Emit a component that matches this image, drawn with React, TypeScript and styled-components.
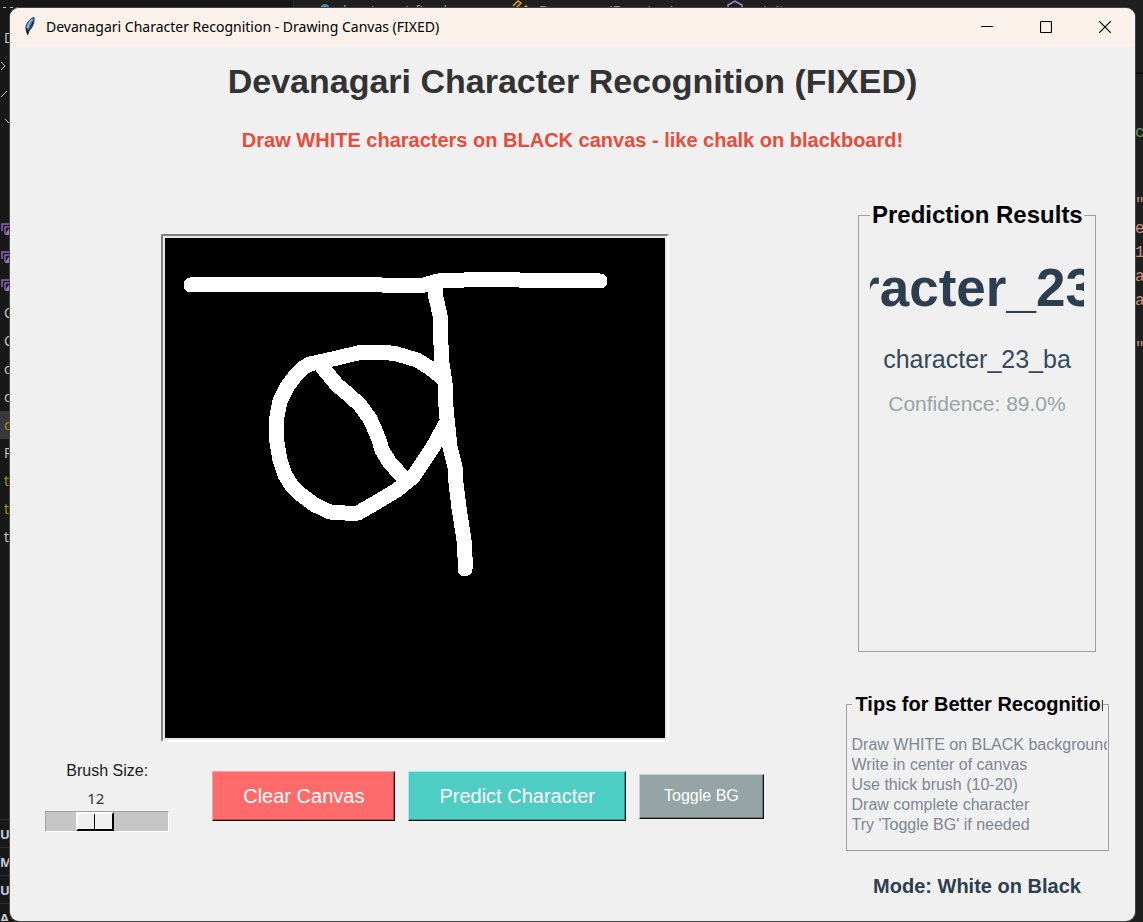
import React, { useState } from "react";
import styled, { createGlobalStyle } from "styled-components";

const GlobalStyle = createGlobalStyle`
  * { box-sizing: border-box; }
  body { margin: 0; background: #181818; font-family: "Liberation Sans", Arial, sans-serif; }
`;

const Desktop = styled.div`
  display: grid;
  grid-template-columns: 10px 1fr 8px;
  grid-template-rows: 8px 1fr;
  min-height: 100vh;
  padding-bottom: 1px;
  background: linear-gradient(90deg, #181818 50%, #1f1f1f 50%);
`;

const EditorTop = styled.div`
  grid-column: 1 / -1;
  display: grid;
  grid-template-columns: 294px 1fr;
  height: 8px;
  overflow: hidden;
  background: #1f1f1f;
  color: #a0a0a0;
  font: 14px/22px "Open Sans", sans-serif;
`;

const ExplorerTitle = styled.span`
  background: #181818;
  border-right: 1px solid #2b2b2b;
  color: #cccccc;
  font-size: 13px;
  font-weight: 700;
`;

const Breadcrumbs = styled.div`
  display: flex;
  align-items: flex-start;
  gap: 8px;
  padding-left: 26px;
  white-space: nowrap;

  svg { flex: none; }
`;

const Crumb = styled.span<{ $width: number }>`
  width: ${(p) => p.$width}px;
`;

const Explorer = styled.div`
  height: 0;
  min-height: 100%;
  overflow: hidden;
  background: #181818;
  font: 14px/28px "Open Sans", sans-serif;
`;

const ExplorerRow = styled.div<{ $color?: string; $active?: boolean; $icon?: boolean }>`
  display: flex;
  align-items: center;
  height: 28px;
  padding-left: ${(p) => (p.$icon ? 1 : 4)}px;
  color: ${(p) => p.$color ?? "#cccccc"};
  background: ${(p) => (p.$active ? "#37373d" : "transparent")};

  svg { flex: none; }
`;

const ExplorerGap = styled.div<{ $height: number }>`
  height: ${(p) => p.$height}px;
`;

const ExplorerSection = styled.div`
  height: 28px;
  border-top: 1px solid #2b2b2b;
  color: #cccccc;
  font-size: 13px;
  font-weight: 700;
`;

const CodeEdge = styled.div`
  height: 0;
  min-height: 100%;
  overflow: hidden;
  background: #1f1f1f;
  font: 16px/24px "Liberation Mono", monospace;
  white-space: pre;
`;

const CodeHeader = styled.div`
  height: 66px;
  margin-bottom: 47px;
  border-bottom: 2px solid #101010;
`;

const CodeLine = styled.div<{ $color: string }>`
  height: 24px;
  color: ${(p) => p.$color};
`;

const Window = styled.div`
  display: flex;
  flex-direction: column;
  min-width: 0;
  overflow: hidden;
  border-radius: 9px;
  box-shadow: 0 0 0 1px #444444;
  background: #f0f0f0;
  z-index: 1;
`;

const TitleBar = styled.header`
  display: flex;
  align-items: center;
  height: 38px;
  padding: 0 1px 0 12px;
  background: #faf1eb;
  color: #000;
  font: 14px/20px "Noto Sans", sans-serif;
`;

const TitleText = styled.span`
  flex: 1;
  padding-left: 8px;
  white-space: nowrap;
`;

const CaptionButton = styled.button`
  display: grid;
  place-items: center;
  width: 59px;
  height: 38px;
  padding: 0;
  border: 0;
  background: transparent;
`;

const Heading = styled.h1`
  margin: 15px 0 0;
  color: #333333;
  font-size: 34px;
  line-height: 40px;
  text-align: center;
`;

const Subtitle = styled.p`
  margin: 27px 0 0;
  color: #e74c3c;
  font-size: 20px;
  font-weight: 700;
  line-height: 24px;
  text-align: center;
`;

const Main = styled.main`
  display: grid;
  grid-template-columns: 1fr 316px;
  padding-top: 49px;
`;

const DrawColumn = styled.section`
  display: flex;
  flex-direction: column;
  align-items: center;
  padding-top: 33px;
`;

const CanvasFrame = styled.div`
  display: flex;
  padding: 2px;
  border: 2px solid;
  border-color: #808080 #ffffff #ffffff #808080;
  background: #e8e8e8;
`;

const Controls = styled.div`
  display: flex;
  align-items: center;
  gap: 13px;
  padding: 18px 20px 0 0;
`;

const BrushControl = styled.div`
  display: flex;
  flex-direction: column;
  width: 124px;
  margin-right: 30px;
`;

const BrushLabel = styled.label`
  color: #1a1a1a;
  font-size: 16px;
  line-height: 22px;
  text-align: center;
`;

const BrushValue = styled.output`
  padding: 5px 0 2px 42px;
  color: #333;
  font: 15px/22px "Noto Sans", sans-serif;
`;

const BrushSlider = styled.input`
  appearance: none;
  width: 124px;
  height: 21px;
  margin: 0;
  border: 1px solid;
  border-color: #a0a0a0 #ffffff #ffffff #a0a0a0;
  background: #c6c6c6;

  &::-webkit-slider-thumb {
    appearance: none;
    box-sizing: border-box;
    width: 38px;
    height: 19px;
    border: 2px solid;
    border-color: #ffffff #000000 #000000 #ffffff;
    background: linear-gradient(90deg, #efefef 16px, #000 16px, #000 17px, #fff 17px, #efefef 18px);
  }
`;

const ActionButton = styled.button<{ $bg: string; $light: string; $dark: string; $small?: boolean }>`
  height: ${(p) => (p.$small ? 45 : 50)}px;
  padding: 0 ${(p) => (p.$small ? 24 : 30)}px;
  border: 1px solid;
  border-color: ${(p) => p.$light} #111 #111 ${(p) => p.$light};
  box-shadow: inset -1px -1px ${(p) => p.$dark};
  background: ${(p) => p.$bg};
  color: #fff;
  font-family: inherit;
  font-size: ${(p) => (p.$small ? 16 : 20)}px;
  white-space: nowrap;
`;

const SideColumn = styled.aside`
  display: flex;
  flex-direction: column;
  align-items: center;
`;

const Group = styled.fieldset<{ $width: number; $height: number; $padding: string }>`
  width: ${(p) => p.$width}px;
  height: ${(p) => p.$height}px;
  min-width: 0;
  margin: 0;
  padding: ${(p) => p.$padding};
  border: 1px solid #a0a0a0;
  overflow: hidden;
`;

const GroupTitle = styled.legend<{ $size: number; $width: number; $indent: number }>`
  width: ${(p) => p.$width}px;
  padding: 0 0 0 ${(p) => p.$indent}px;
  overflow: hidden;
  color: #000;
  font-size: ${(p) => p.$size}px;
  font-weight: 700;
  line-height: 28px;
  white-space: nowrap;
`;

const BigResult = styled.div`
  display: flex;
  justify-content: center;
  margin-top: 27px;
  overflow: hidden;
  color: #2c3e50;
  font-size: 53px;
  font-weight: 700;
  line-height: 64px;
`;

const ResultName = styled.div`
  margin-top: 25px;
  color: #34495e;
  font-size: 25px;
  line-height: 28px;
  text-align: center;
`;

const Confidence = styled.div`
  margin-top: 19px;
  color: #95a5a6;
  font-size: 21px;
  line-height: 24px;
  text-align: center;
`;

const TipList = styled.ul`
  margin: 17px 0 0;
  padding: 0;
  overflow: hidden;
  list-style: none;
  color: #7b8794;
  font-size: 16px;
  line-height: 20px;
  white-space: nowrap;
`;

const TipsBlock = styled.div`
  padding-top: 38px;
`;

const Mode = styled.p`
  margin: 23px 0 0;
  color: #2c3e50;
  font-size: 20px;
  font-weight: 700;
  line-height: 24px;
`;

const strokes = [
  "26,47 37,46 120,46 124,47 158,46 193,46 217,47 255,48 273,43 299,42 315,41 350,41 359,43 390,42 418,42 435,43",
  "270,48 271,60 275,77 276,107 277,125 280,145 281,169 282,180 285,209 290,229 291,245 294,270 299,302 300,319 300,331",
  "275,138 265,130 252,122 232,116 218,114 197,114 172,120 145,126 138,130 130,138 122,149 115,163 112,178 111,192 112,205 115,222 120,237 127,248 135,256 150,267 165,274 180,275 193,275 212,264 232,252 248,239 268,209 280,187",
  "158,130 172,147 184,157 195,167 205,181 210,192 214,202 217,212 225,225 237,238",
];

const tips = [
  "Draw WHITE on BLACK background",
  "Write in center of canvas",
  "Use thick brush (10-20)",
  "Draw complete character",
  "Try 'Toggle BG' if needed",
];

function Feather() {
  return (
    <svg width="16" height="20" viewBox="0 0 16 20" aria-hidden="true">
      <path d="M12 .5C8 1.500 4.500 6 3.800 10.500L5 15C9 12.500 12.500 8 12 .5Z" fill="#3d73b5" stroke="#2a3542" strokeWidth="1" />
      <path d="M10.500 2.500C8 4 6.200 7 5.500 11" fill="none" stroke="#8fc0ee" strokeWidth="1.600" />
      <path d="M11.500 4C10 8 7.500 12 5.500 18" fill="none" stroke="#1c1c1c" strokeWidth="1" />
      <path d="M3.800 11L4 14.500L5.500 18L7 13.500" fill="#1c1c1c" />
    </svg>
  );
}

function PictureIcon() {
  return (
    <svg width="14" height="12" viewBox="0 0 14 12" aria-hidden="true">
      <path d="M1 8V1H13M4 11V4H14" fill="none" stroke="#8f63b8" strokeWidth="1.500" />
      <path d="M4 12L7.500 6L11 12Z" fill="#a074c4" />
    </svg>
  );
}

function Chevron({ variant }: { variant: "closed" | "open" | "nested" }) {
  const paths = {
    closed: "M-1 0L4 5L-1 10",
    open: "M-4 3L0 8L6 2",
    nested: "M4 2L10 8",
  };
  return (
    <svg width="10" height="10" viewBox="0 0 10 10" fill="none" stroke="#cccccc" aria-hidden="true">
      <path d={paths[variant]} />
    </svg>
  );
}

export default function App() {
  const [brush, setBrush] = useState(12);
  return (
    <>
      <GlobalStyle />
      <Desktop>
        <EditorTop>
          <ExplorerTitle>ANDWRITTEN</ExplorerTitle>
          <Breadcrumbs>
            <svg width="10" height="8" viewBox="0 0 10 8" aria-hidden="true">
              <path d="M1 8V6Q5 2 9 6V8Z" fill="#4b8baf" />
            </svg>
            <Crumb $width={149}>drawing_ui_fixed.py</Crumb>
            <Crumb $width={8}>›</Crumb>
            <svg width="20" height="8" viewBox="0 0 20 8" fill="none" stroke="#ee9d28" strokeWidth="1.500" aria-hidden="true">
              <path d="M2 6L7 1L10 3L5 8M13 8L15 6L17 8" />
            </svg>
            <Crumb $width={164}>DevanagariDrawingApp</Crumb>
            <Crumb $width={8}>›</Crumb>
            <svg width="16" height="8" viewBox="0 0 16 8" fill="none" stroke="#b180d7" strokeWidth="1.500" aria-hidden="true">
              <path d="M1 8V5L8 1L15 5V8" />
            </svg>
            <Crumb $width={60}>__init__</Crumb>
          </Breadcrumbs>
        </EditorTop>

        <Explorer>
          <ExplorerGap $height={16} />
          <ExplorerRow>D</ExplorerRow>
          <ExplorerRow $icon><Chevron variant="closed" /></ExplorerRow>
          <ExplorerRow $icon><Chevron variant="open" /></ExplorerRow>
          <ExplorerRow $icon><Chevron variant="nested" /></ExplorerRow>
          <ExplorerGap $height={79} />
          <ExplorerRow $icon><PictureIcon /></ExplorerRow>
          <ExplorerRow $icon><PictureIcon /></ExplorerRow>
          <ExplorerRow $icon><PictureIcon /></ExplorerRow>
          <ExplorerRow>C</ExplorerRow>
          <ExplorerRow>C</ExplorerRow>
          <ExplorerRow>c</ExplorerRow>
          <ExplorerRow>c</ExplorerRow>
          <ExplorerRow $color="#b89500" $active>c</ExplorerRow>
          <ExplorerRow>R</ExplorerRow>
          <ExplorerRow $color="#b89500">t</ExplorerRow>
          <ExplorerRow $color="#b89500">t</ExplorerRow>
          <ExplorerRow>t</ExplorerRow>
          <ExplorerGap $height={268} />
          <ExplorerSection>UT</ExplorerSection>
          <ExplorerSection>M</ExplorerSection>
          <ExplorerSection>UN</ExplorerSection>
          <ExplorerSection>A</ExplorerSection>
        </Explorer>

        <Window>
          <TitleBar>
            <Feather />
            <TitleText>Devanagari Character Recognition - Drawing Canvas (FIXED)</TitleText>
            <CaptionButton aria-label="Minimize">
              <svg width="12" height="12" viewBox="0 0 12 12"><path d="M0 5.500H12" stroke="#000" /></svg>
            </CaptionButton>
            <CaptionButton aria-label="Maximize">
              <svg width="12" height="12" viewBox="0 0 12 12"><rect x=".5" y=".5" width="11" height="11" rx="1" fill="none" stroke="#000" strokeWidth="1.200" /></svg>
            </CaptionButton>
            <CaptionButton aria-label="Close">
              <svg width="12" height="12" viewBox="0 0 12 12"><path d="M0 0L12 12M12 0L0 12" stroke="#000" strokeWidth="1.200" /></svg>
            </CaptionButton>
          </TitleBar>

          <Heading>Devanagari Character Recognition (FIXED)</Heading>
          <Subtitle>Draw WHITE characters on BLACK canvas - like chalk on blackboard!</Subtitle>

          <Main>
            <DrawColumn>
              <CanvasFrame>
                <svg width="500" height="500" viewBox="0 0 500 500" role="img" aria-label="Drawing canvas">
                  <rect width="500" height="500" fill="#000" />
                  <g fill="none" stroke="#fff" strokeWidth="15" strokeLinecap="round" strokeLinejoin="round" shapeRendering="crispEdges">
                    {strokes.map((points) => (
                      <polyline key={points} points={points} />
                    ))}
                  </g>
                </svg>
              </CanvasFrame>
              <Controls>
                <BrushControl>
                  <BrushLabel htmlFor="brush">Brush Size:</BrushLabel>
                  <BrushValue htmlFor="brush">{brush}</BrushValue>
                  <BrushSlider
                    id="brush"
                    type="range"
                    min={5}
                    max={25}
                    value={brush}
                    onChange={(e) => setBrush(Number(e.target.value))}
                  />
                </BrushControl>
                <ActionButton $bg="#ff6b6b" $light="#ffa0a0" $dark="#b34b4b">Clear Canvas</ActionButton>
                <ActionButton $bg="#4ecdc4" $light="#8cf5ee" $dark="#368f89">Predict Character</ActionButton>
                <ActionButton $bg="#95a5a6" $light="#bfd4d5" $dark="#687374" $small>Toggle BG</ActionButton>
              </Controls>
            </DrawColumn>

            <SideColumn>
              <Group $width={238} $height={451} $padding="0 11px">
                <GroupTitle $size={24} $width={214} $indent={2}>Prediction Results</GroupTitle>
                <BigResult>character_23_ba</BigResult>
                <ResultName>character_23_ba</ResultName>
                <Confidence>Confidence: 89.0%</Confidence>
              </Group>
              <TipsBlock>
                <Group $width={263} $height={161} $padding="0 1px 0 5px">
                  <GroupTitle $size={20} $width={251} $indent={4}>Tips for Better Recognition</GroupTitle>
                  <TipList>
                    {tips.map((tip) => (
                      <li key={tip}>{tip}</li>
                    ))}
                  </TipList>
                </Group>
              </TipsBlock>
              <Mode>Mode: White on Black</Mode>
            </SideColumn>
          </Main>
        </Window>

        <CodeEdge>
          <CodeHeader />
          <CodeLine $color="#6a9955">c</CodeLine>
          <CodeLine $color="#1f1f1f"> </CodeLine>
          <CodeLine $color="#4ec9b0"> </CodeLine>
          <CodeLine $color="#ce9178">"</CodeLine>
          <CodeLine $color="#ce9178">er</CodeLine>
          <CodeLine $color="#ce9178">18</CodeLine>
          <CodeLine $color="#ce9178">a</CodeLine>
          <CodeLine $color="#ce9178">a</CodeLine>
          <CodeLine $color="#1f1f1f"> </CodeLine>
          <CodeLine $color="#ce9178">"</CodeLine>
        </CodeEdge>
      </Desktop>
    </>
  );
}
